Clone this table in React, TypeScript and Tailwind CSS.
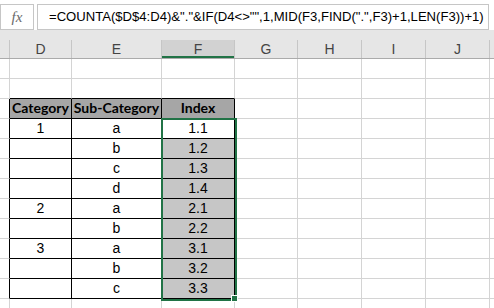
import React from "react";

const COLS = [
  { key: "C", w: 10 },
  { key: "D", w: 62 },
  { key: "E", w: 90 },
  { key: "F", w: 73 },
  { key: "G", w: 63 },
  { key: "H", w: 64 },
  { key: "I", w: 64 },
  { key: "J", w: 64 },
  { key: "", w: 4 },
];

// rows: index 0..12, row 2 is the table header, rows 3..11 hold data
const DATA: Record<number, [string, string, string]> = {
  2: ["Category", "Sub-Category", "Index"],
  3: ["1", "a", "1.1"],
  4: ["", "b", "1.2"],
  5: ["", "c", "1.3"],
  6: ["", "d", "1.4"],
  7: ["2", "a", "2.1"],
  8: ["", "b", "2.2"],
  9: ["3", "a", "3.1"],
  10: ["", "b", "3.2"],
  11: ["", "c", "3.3"],
};

const FORMULA = '=COUNTA($D$4:D4)&"."&IF(D4<>"",1,MID(F3,FIND(".",F3)+1,LEN(F3))+1)';

function FormulaBar() {
  return (
    <div className="flex h-[30px] bg-white pt-[4px]">
      <div className="flex h-[26px] w-[34px] items-center justify-center border border-[#c6c6c6] bg-white">
        <span className="text-[15px] italic text-[#6a6a6a]" style={{ fontFamily: '"Liberation Serif", serif' }}>
          fx
        </span>
      </div>
      <div className="ml-[3px] flex h-[26px] w-[452px] items-center border border-[#c6c6c6] bg-white pl-[11px]">
        <span className="whitespace-nowrap text-[13.1px] text-black">{FORMULA}</span>
      </div>
    </div>
  );
}

function ColumnHeaders() {
  return (
    <div className="flex h-[29px] flex-col bg-[#e6e6e6]">
      <div className="h-[10px]" />
      <div className="flex h-[19px] border-b border-[#ababab]">
        {COLS.map((c, i) => (
          <div
            key={i}
            className={`relative flex shrink-0 items-center justify-center text-[14px] text-[#444] ${
              c.key === "F" ? "bg-[#d2d2d2]" : ""
            } ${i < COLS.length - 1 ? "border-r border-[#c6c6c6]" : ""}`}
            style={{ width: c.w }}
          >
            {c.key === "C" ? "" : c.key}
            {c.key === "F" && <div className="absolute bottom-0 left-0 right-0 h-[2px] bg-[#217346]" />}
          </div>
        ))}
      </div>
    </div>
  );
}

function Cell({ col, row }: { col: number; row: number }) {
  const w = COLS[col].w;
  const inTable = row >= 2 && row <= 11;
  const tableCol = col >= 1 && col <= 3;
  const isHeader = row === 2 && tableCol;

  // right border black for C (table left edge) and D,E,F inside table rows
  const rightBlack = inTable && col >= 0 && col <= 3;
  // bottom border black for table cells and the row just above the table
  const bottomBlack = tableCol && row >= 1 && row <= 11;

  let bg = "";
  if (isHeader) bg = "bg-[#a6a6a6]";
  else if (inTable && col === 3 && row >= 4) bg = "bg-[#c6c6c6]";

  const text = inTable && tableCol ? DATA[row][col - 1] : "";

  return (
    <div
      className={`flex h-[20px] shrink-0 items-end justify-center whitespace-nowrap border-b pb-[1px] ${
        col < COLS.length - 1 ? "border-r" : ""
      } ${rightBlack ? "border-r-black" : "border-r-[#d4d4d4]"} ${
        bottomBlack ? "border-b-black" : "border-b-[#d4d4d4]"
      } ${bg} ${
        isHeader ? "font-bold text-[14px] leading-[18px] text-black" : "text-[14px] leading-[17px] text-black"
      }`}
      style={{
        width: w,
        fontFamily: isHeader ? 'Lato, "Open Sans", sans-serif' : '"Liberation Sans", Arial, sans-serif',
      }}
    >
      {text}
    </div>
  );
}

export default function App() {
  const rows = Array.from({ length: 13 }, (_, i) => i);
  return (
    <div
      className="relative h-[308px] w-[494px] overflow-hidden bg-white"
      style={{ fontFamily: '"Liberation Sans", Arial, sans-serif' }}
    >
      <FormulaBar />
      <ColumnHeaders />
      <div className="flex flex-col">
        {rows.map((r) => (
          <div key={r} className="flex">
            {COLS.map((_, c) => (
              <Cell key={c} col={c} row={r} />
            ))}
          </div>
        ))}
      </div>

      {/* selection outline over F4:F12 */}
      <div className="pointer-events-none absolute left-[161px] top-[118px] h-[183px] w-[76px] border-2 border-[#217346]" />
      <div className="pointer-events-none absolute left-[231px] top-[295px] h-[7px] w-[7px] border border-white bg-[#217346]" />
    </div>
  );
}
